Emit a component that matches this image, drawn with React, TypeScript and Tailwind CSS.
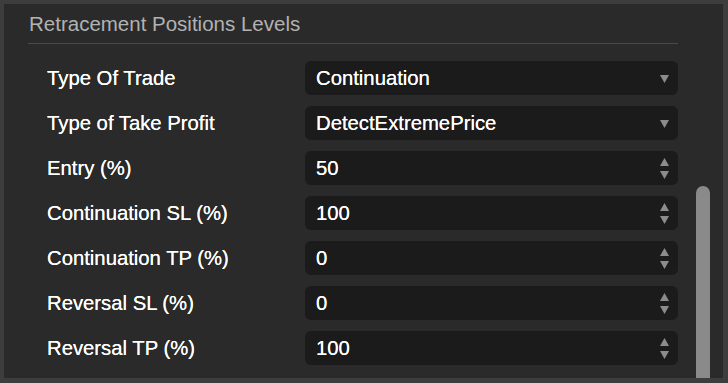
import React from "react";

type Row = { label: string; value: string; kind: "select" | "number" };

const rows: Row[] = [
  { label: "Type Of Trade", value: "Continuation", kind: "select" },
  { label: "Type of Take Profit", value: "DetectExtremePrice", kind: "select" },
  { label: "Entry (%)", value: "50", kind: "number" },
  { label: "Continuation SL (%)", value: "100", kind: "number" },
  { label: "Continuation TP (%)", value: "0", kind: "number" },
  { label: "Reversal SL (%)", value: "0", kind: "number" },
  { label: "Reversal TP (%)", value: "100", kind: "number" },
];

function SelectArrow() {
  return (
    <svg width="9" height="9" viewBox="0 0 9 9" className="block">
      <path d="M0 1 L9 1 L4.5 9 Z" fill="#8c8c8c" />
    </svg>
  );
}

function Spinner() {
  return (
    <div className="flex flex-col items-center gap-[5px]">
      <svg width="9" height="8" viewBox="0 0 9 8" className="block">
        <path d="M4.5 0 L9 8 L0 8 Z" fill="#8c8c8c" />
      </svg>
      <svg width="9" height="8" viewBox="0 0 9 8" className="block">
        <path d="M0 0 L9 0 L4.5 8 Z" fill="#8c8c8c" />
      </svg>
    </div>
  );
}

export default function App() {
  return (
    <div
      className="w-[728px] h-[383px] bg-[#3d3d3d] pt-[4px] pl-[4px] pr-[5px] pb-[5px] overflow-hidden"
      style={{ fontFamily: '"Liberation Sans", Arial, sans-serif' }}
    >
      <div className="w-full h-full bg-[#2a2a2a] flex overflow-hidden">
        <div className="w-[674px] pl-[24px] flex flex-col">
          <div className="pt-[8px] pl-[1px] h-[32px] text-[20.5px] leading-[24px] text-[#b2b2b2]">
            Retracement Positions Levels
          </div>
          <div className="mt-[7px] h-px bg-[#4a4a4a]" />
          <div className="pt-[17px] flex flex-col gap-[11px]">
            {rows.map((r) => (
              <div key={r.label} className="flex items-center h-[34px]">
                <div className="w-[277px] pl-[19px] text-[20.3px] text-white leading-[24px] [text-shadow:0_0_0.4px_#fff]">
                  {r.label}
                </div>
                <div className="flex-1 h-[34px] rounded-[6px] bg-[#1b1b1b] flex items-center pl-[11px] pr-[9px]">
                  <span className="flex-1 text-[20.3px] text-white leading-[24px] [text-shadow:0_0_0.4px_#fff]">
                    {r.value}
                  </span>
                  {r.kind === "select" ? <SelectArrow /> : <Spinner />}
                </div>
              </div>
            ))}
          </div>
        </div>
        <div className="ml-[18px] w-[14px] flex flex-col">
          <div className="h-[182px]" />
          <div className="flex-1 bg-[#8a8a8a] rounded-t-full" />
        </div>
      </div>
    </div>
  );
}
